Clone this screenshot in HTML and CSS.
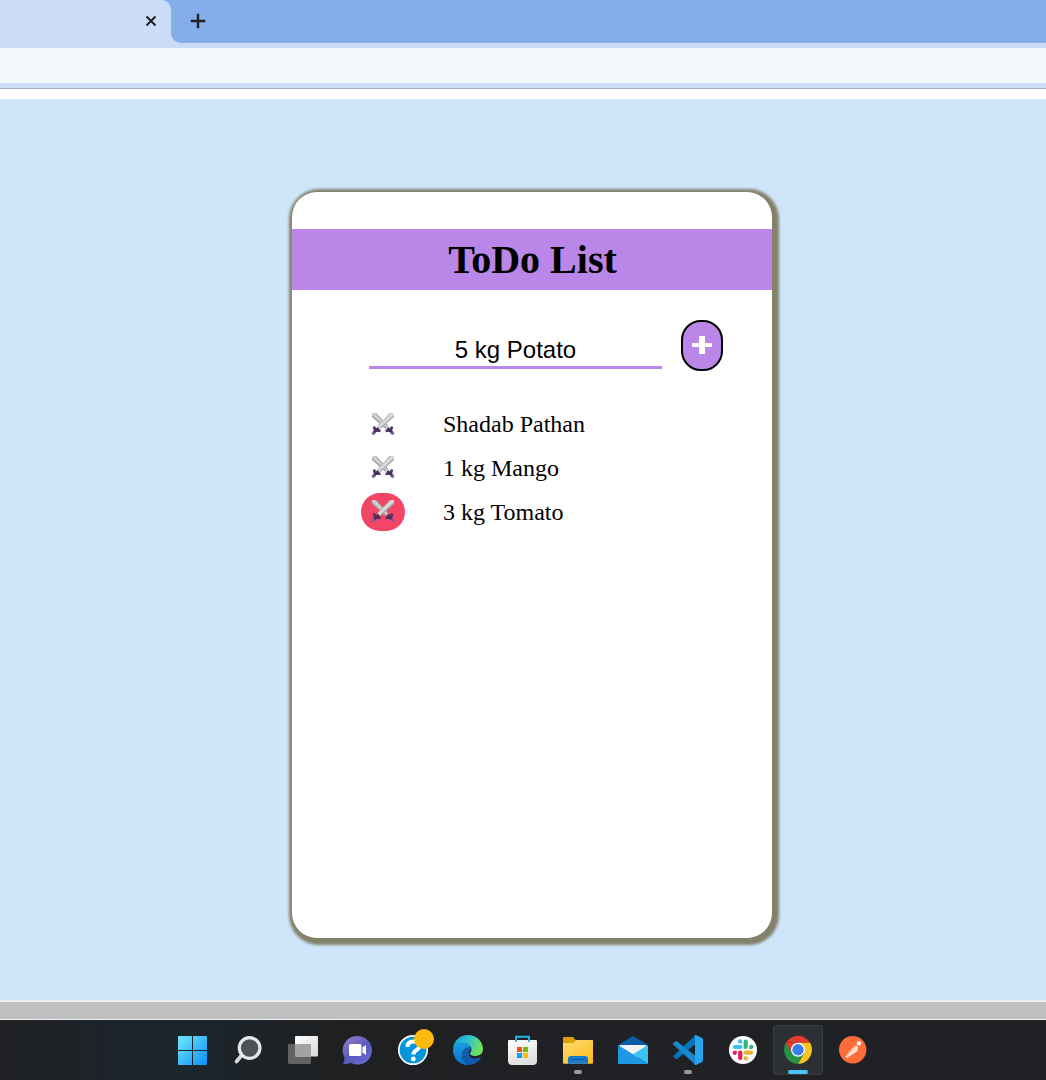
FILE: index.html
```html
<!DOCTYPE html>
<html lang="en">
<head>
<meta charset="utf-8">
<title>ToDo List</title>
<link rel="stylesheet" href="styles.css">
</head>
<body>
<svg class="defs" width="0" height="0" aria-hidden="true">
  <defs>
    <symbol id="swords" viewBox="0 0 24 24">
      <path d="M1 1h4.200L17.500 14l-3 3L1 5z" fill="#a3a1a4"/>
      <path d="M1 1h3L17 15l-1.200 1.200L1 3z" fill="#cfcfcf"/>
      <path d="M23 1h-4.200L6.500 14l3 3L23 5z" fill="#aaa9ab"/>
      <path d="M23 1h-3L6.800 14.300l1.900 1.900L23 3z" fill="#d9d9d9"/>
      <path d="M3 14.500l1 3.500 5.500 1M21 14.500l-1 3.500-5.500 1" fill="none" stroke="#49305c" stroke-width="2.600"/>
      <path d="M2.500 21l5-5M21.500 21l-5-5" stroke="#49305c" stroke-width="2.800"/>
      <circle cx="2.500" cy="21.300" r="1.700" fill="#71659a"/><circle cx="21.500" cy="21.300" r="1.700" fill="#71659a"/>
    </symbol>
  </defs>
</svg>

<header class="tabstrip">
  <div class="tab"><svg width="12" height="12" viewBox="0 0 12 12"><path d="M1.500 1.500l9 9M10.500 1.500l-9 9" stroke="#202124" stroke-width="2"/></svg></div>
  <div class="strip">
    <svg width="16" height="16" viewBox="0 0 16 16"><path d="M8 .8v14.400M.8 8h14.400" stroke="#202124" stroke-width="2.400"/></svg>
  </div>
</header>
<div class="toolbar"></div>

<main class="page">
  <section class="card">
    <h1 class="title">ToDo List</h1>
    <div class="entry">
      <input class="field" type="text" value="5 kg Potato" aria-label="Item">
      <button class="add" aria-label="Add"><svg width="20" height="18" viewBox="0 0 20 18"><path d="M7 0h6v7h7v4h-7v7H7v-7H0V7h7z" fill="#fff"/></svg></button>
    </div>
    <ul class="items">
      <li class="item"><span class="remove"><svg width="24" height="24"><use href="#swords"/></svg></span><span>Shadab Pathan</span></li>
      <li class="item"><span class="remove"><svg width="24" height="24"><use href="#swords"/></svg></span><span>1 kg Mango</span></li>
      <li class="item"><span class="remove remove-hover"><svg width="24" height="24"><use href="#swords"/></svg></span><span>3 kg Tomato</span></li>
    </ul>
  </section>
</main>
<div class="window-edge"></div>

<footer class="taskbar">
  <svg class="app" viewBox="0 0 50 50">
    <linearGradient id="win" gradientUnits="userSpaceOnUse" x1="10" y1="11" x2="39" y2="40"><stop stop-color="#6fe8fd"/><stop offset="1" stop-color="#0c8ff8"/></linearGradient>
    <path d="M11 11h13v14H10V12q0-1 1-1zM25 11h13q1 0 1 1v13H25zM10 26h14v14H11q-1 0-1-1zM25 26h14v13q0 1-1 1H25z" fill="url(#win)"/>
  </svg>
  <svg class="app" viewBox="0 0 50 50">
    <path d="M18.500 30.500l-5 6" stroke="#d9dadb" stroke-width="3.600" stroke-linecap="round"/>
    <circle cx="26.600" cy="23" r="10.300" fill="#4b5357" stroke="#e7e8e9" stroke-width="3.200"/>
  </svg>
  <svg class="app" viewBox="0 0 50 50">
    <linearGradient id="tv" x1="0" y1="0" x2="1" y2="1"><stop stop-color="#fff"/><stop offset="1" stop-color="#d8d8d8"/></linearGradient>
    <rect x="10" y="19" width="23" height="20" rx="1" fill="#626262"/>
    <rect x="17" y="11" width="23" height="20.500" rx="1" fill="url(#tv)"/>
    <path d="M17 19h16v12.500H18q-1 0-1-1z" fill="#a2a2a2"/>
  </svg>
  <svg class="app" viewBox="0 0 50 50">
    <linearGradient id="chat" x1="0" y1="0" x2=".7" y2="1"><stop stop-color="#9a80c4"/><stop offset=".6" stop-color="#5a59c0"/><stop offset="1" stop-color="#666bd0"/></linearGradient>
    <path d="M24.700 11a14.300 14.300 0 1 1-7 26.800Q14 39.600 10 38.700q2-3 1.500-6.500A14.300 14.300 0 0 1 24.700 11z" fill="url(#chat)"/>
    <rect x="16" y="19" width="12.500" height="12" rx="1.500" fill="#fff"/><path d="M29.500 22.500l3.500-2.500v10l-3.500-2.500z" fill="#fff"/>
  </svg>
  <svg class="app" viewBox="0 0 50 50">
    <circle cx="25" cy="25" r="14.200" fill="#0695da" stroke="#f6f9fa" stroke-width="1.700"/>
    <path d="M19.500 22q0-5.500 6-5.500 5.800 0 5.800 4.500 0 2.500-3 4.200-2.800 1.300-2.800 4.300" fill="none" stroke="#fff" stroke-width="4"/>
    <circle cx="25.300" cy="34" r="2.400" fill="#fff"/><circle cx="36" cy="14" r="10" fill="#ffb90b"/>
  </svg>
  <svg class="app" viewBox="0 0 50 50">
    <linearGradient id="edgeTop" x1="0" y1="0" x2="1" y2=".4"><stop stop-color="#1598df"/><stop offset=".5" stop-color="#2cc2d2"/><stop offset="1" stop-color="#6de35b"/></linearGradient>
    <linearGradient id="edgeLeft" x1="0" y1="0" x2="0" y2="1"><stop stop-color="#1b9de0"/><stop offset="1" stop-color="#0871cc"/></linearGradient>
    <path d="M10 24C11 15 17 10 25 10c9 0 15 7 15 14 0 5-4 7-8 7-3 0-5-1-5-2.500 0-1 1.500-2 1.500-4C28.500 20 24 17.500 19 18c-4 .3-7 2-9 6z" fill="url(#edgeTop)"/>
    <path d="M10 25c1-5 5-7.500 9.500-7.500 4.500 0 8.500 2.500 8.500 6-5-2-9 2-9 7 0 5 3.500 8.500 8 9.300C17 41 10 34 10 25z" fill="url(#edgeLeft)"/>
    <path d="M28 22c-5.500-.5-9.500 3.500-9 9 .5 5 4 9 8 9 5-.8 8.500-3.500 10.800-6.800.4-.7-.3-1.200-1-.8-5.500 2.500-10.800.3-10.800-4 0-2.500 2-3 2-6.400z" fill="#105bae"/>
  </svg>
  <svg class="app" viewBox="0 0 50 50">
    <linearGradient id="bag" x1="0" y1="0" x2=".4" y2="1"><stop stop-color="#fff"/><stop offset="1" stop-color="#dedede"/></linearGradient>
    <path d="M10 16q0-1 1-1h27q1 0 1 1v20q0 4-4 4H14q-4 0-4-4z" fill="url(#bag)"/>
    <path d="M18 17v-5.300h13V17" fill="none" stroke="#22b5eb" stroke-width="1.900"/>
    <path d="M19 22h5v5h-5z" fill="#f25022"/><path d="M25 22h5v5h-5z" fill="#7fba00"/><path d="M19 28h5v5h-5z" fill="#00a4ef"/><path d="M25 28h5v5h-5z" fill="#ffb900"/>
  </svg>
  <span class="slot"><svg class="app" viewBox="0 0 50 50">
    <linearGradient id="folder" x1="0" y1="0" x2=".7" y2="1"><stop stop-color="#ffdd70"/><stop offset="1" stop-color="#fdbd24"/></linearGradient>
    <path d="M10 13q0-1 1-1h9l3 3.500V19H10z" fill="#dfa006"/>
    <path d="M10 18h10l3-3h16q1 0 1 1v22q0 .8-1 .8H11q-1 0-1-1z" fill="url(#folder)"/>
    <path d="M15 38.800V34q0-3 3-3h14q3 0 3 3v4.800z" fill="#147bcb"/><path d="M18.500 34.500h13" stroke="#0a539a"/>
  </svg><i class="running"></i></span>
  <svg class="app" viewBox="0 0 50 50">
    <path d="M10 20l15-9 15 9v4H10z" fill="#0a5ba8"/><path d="M12 20h26v9L25 34l-13-5z" fill="#f1f1f1"/>
    <path d="M10 20l30 18.500q-.3.500-1 .5H11q-1 0-1-1z" fill="#1b9ae3"/><path d="M40 20v18.500L25 29.200z" fill="#38c5f5"/>
  </svg>
  <span class="slot"><svg class="app" viewBox="0 0 50 50">
    <path d="M10.300 31L32 10.500V19.500L14.300 33.700q-1 .7-1.800 0l-2-1.500q-.9-.6-.2-1.200z" fill="#0875b8"/>
    <path d="M10.300 19.500q-.8-.8 0-1.500l2.200-1.500q.9-.6 1.700 0L32 30.500V39.500z" fill="#1889cf"/>
    <path d="M31.500 40q.5-.5.500-2V12q0-1.500-.5-2H33l6 3q1 .5 1 1.700v20.600q0 1.200-1 1.700l-6 3z" fill="#29a4ee"/>
  </svg><i class="running"></i></span>
  <svg class="app" viewBox="0 0 50 50">
    <circle cx="25" cy="25" r="14" fill="#fff"/>
    <g fill="none" stroke-width="4.200" stroke-linecap="round">
      <path d="M17 22h5.500" stroke="#36c5f0"/><path d="M27.700 16.700v5.300" stroke="#2eb67d"/><path d="M27.700 27.600h5.500" stroke="#ecb22e"/><path d="M22.200 27.700V33" stroke="#e01e5a"/>
    </g>
    <path d="M24.200 18.500h-2a2.100 2.100 0 1 1 2-2z" fill="#36c5f0"/><path d="M31.200 23.900v-2a2.100 2.100 0 1 1 2 2z" fill="#2eb67d"/><path d="M25.800 31.200h2a2.100 2.100 0 1 1-2 2z" fill="#ecb22e"/><path d="M18.800 25.800v2a2.100 2.100 0 1 1-2-2z" fill="#e01e5a"/>
  </svg>
  <span class="slot slot-active"><svg class="app" viewBox="0 0 50 50">
    <path d="M12.880 17.800A14 14 0 0 1 37.120 17.800H25z" fill="#e33b2e"/>
    <path d="M37.120 17.800A14 14 0 0 1 25 38.800L31.100 28.300 25 17.800z" fill="#fcc420"/>
    <path d="M12.880 17.800l6.100 10.500L25 17.800z" fill="#e33b2e"/>
    <path d="M12.880 17.800l6.100 10.500 6 3.500 6.100-3.500L25 38.800A14 14 0 0 1 12.880 17.800z" fill="#269447"/>
    <circle cx="25" cy="24.800" r="7" fill="#fff"/><circle cx="25" cy="24.800" r="5.700" fill="#397eed"/>
  </svg><i class="running running-active"></i></span>
  <svg class="app" viewBox="0 0 50 50">
    <circle cx="24.700" cy="24.700" r="13.700" fill="#ff6c37"/>
    <circle cx="31" cy="18.300" r="2.300" fill="#fff2ec"/>
    <path d="M17.500 32l3-4.500 6-6.500 2-.5 1.500 1.500-.5 4-5 3.500-6 3.500z" fill="#ffe3d8"/><path d="M20 29l8-7.500" stroke="#f58b66" stroke-width=".8"/>
  </svg>
</footer>
</body>
</html>
```
FILE: styles.css
```css
* { box-sizing: border-box; }
body {
  margin: 0;
  height: 1080px;
  display: flex;
  flex-direction: column;
  overflow: hidden;
  background: #fff;
  font-family: "Liberation Serif", "Times New Roman", serif;
  color: #000;
}
.defs { position: absolute; }
.tabstrip {
  height: 48px;
  display: flex;
  background: #cbdcf6;
}
.tab {
  width: 171px;
  height: 43px;
  display: flex;
  align-items: center;
  justify-content: flex-end;
  padding: 0 14px 1px 0;
  background: radial-gradient(circle at 161px 10px, #cbdcf6 9.500px, transparent 10.500px), linear-gradient(#85ade9, #85ade9) right top / 10px 10px no-repeat;
}
.tab svg, .strip svg { display: block; }
.strip {
  flex: 1;
  height: 43px;
  display: flex;
  align-items: center;
  padding: 0 0 1px 19px;
  border-bottom-left-radius: 10px;
  background: #85ade9;
}
.toolbar {
  height: 41px;
  background: #f4f8fd;
  border-bottom: 1px solid #a2afc8;
  box-shadow: inset 0 -5px #cbdcf6;
}
.page {
  height: 901px;
  margin-top: 10px;
  padding: 93px 0 0 292px;
  background: #cfe6fa;
}
.card {
  width: 480px;
  height: 746px;
  padding-top: 37px;
  border-radius: 25px;
  background: #fff;
  box-shadow: 2px 2px 3px 5px #828169;
}
.title {
  margin: 0;
  height: 61px;
  padding-left: 1px;
  line-height: 62px;
  background: #ba86e8;
  font-size: 40px;
  font-weight: 700;
  text-align: center;
}
.entry {
  display: flex;
  align-items: flex-start;
  gap: 19px;
  padding: 30px 0 0 77px;
}
.field {
  width: 293px;
  height: 33px;
  margin-top: 16px;
  padding: 0 0 2px;
  border: 0;
  border-bottom: 3px solid #ba86e8;
  background: transparent;
  font: 24px "Liberation Sans", Arial, sans-serif;
  color: #000;
  text-align: center;
}
.add {
  width: 42px;
  height: 51px;
  display: flex;
  align-items: center;
  justify-content: center;
  padding: 0 0 1px;
  border: 2px solid #000;
  border-radius: 20px;
  background: #ba86e8;
}
.items {
  margin: 34px 0 0;
  padding: 0 0 0 69px;
  list-style: none;
}
.item {
  height: 44px;
  display: flex;
  align-items: flex-start;
  gap: 38px;
  font-size: 24px;
  line-height: 38px;
}
.remove {
  width: 44px;
  height: 38px;
  display: flex;
  align-items: center;
  justify-content: center;
  padding-bottom: 2px;
  border-radius: 19px;
}
.item:first-child .remove { padding-bottom: 0; }
.remove-hover { background: #f34568; }
.window-edge {
  height: 20px;
  border-top: 2px solid #eee;
  border-bottom: 1px solid #eee;
  background: #c0c0c0;
}
.taskbar {
  height: 60px;
  display: flex;
  align-items: flex-start;
  gap: 5px;
  padding: 5px 0 0 168px;
  background: linear-gradient(90deg, #202124, #1b262d 17%, #1f2022 32%, #202124 60%, #1f2124);
}
.app { width: 50px; height: 50px; flex: none; display: block; }
.slot { position: relative; width: 50px; height: 50px; flex: none; }
.slot-active { border-radius: 4px; background: #2c2f33; box-shadow: inset 0 0 0 1px #393c40; }
.running {
  position: absolute;
  left: 21px;
  bottom: 1px;
  width: 8px;
  height: 4px;
  border-radius: 2px;
  background: #9b9b9c;
}
.running-active { left: 15px; width: 20px; background: #4cc2ff; }
```
